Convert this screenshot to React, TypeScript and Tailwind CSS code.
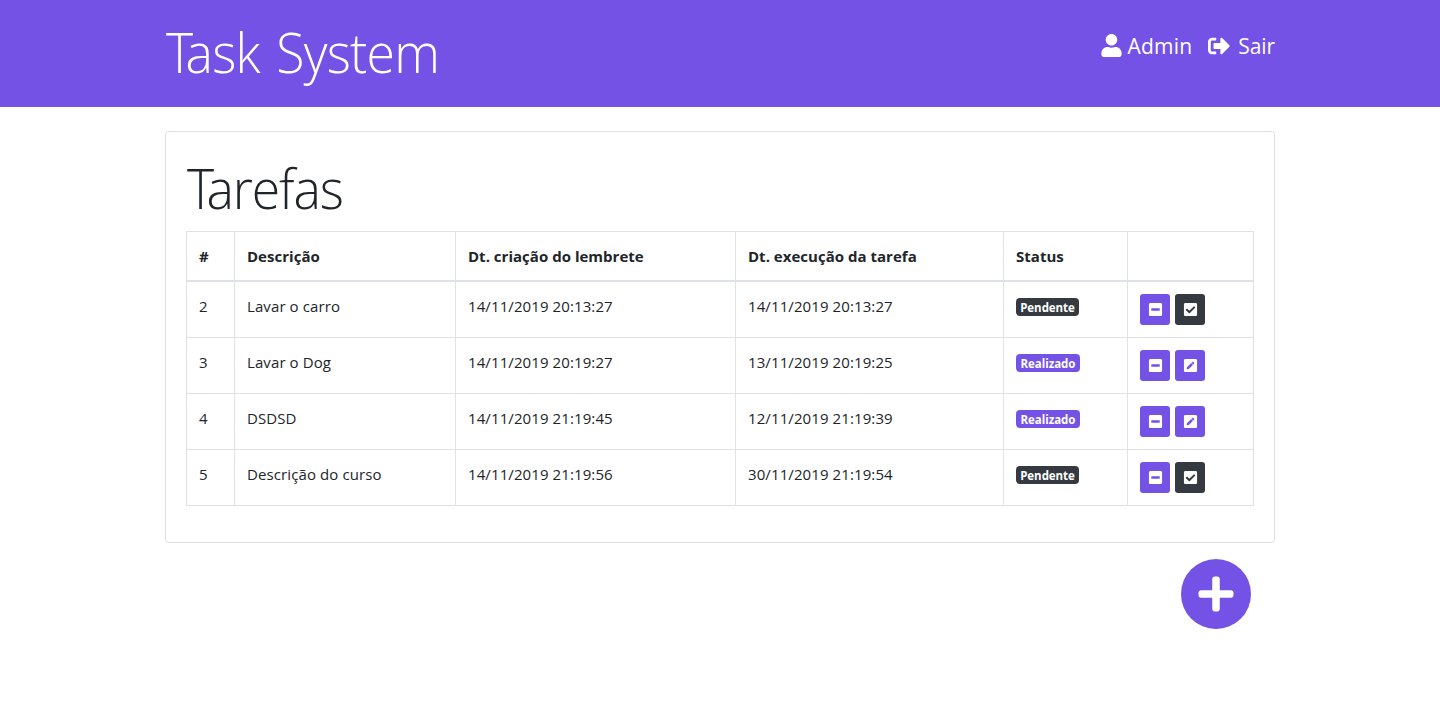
import type { ReactNode } from "react";
import { FaCheckSquare, FaMinusSquare, FaPenSquare, FaPlus, FaSignOutAlt, FaUser } from "react-icons/fa";

type Task = { id: number; text: string; created: string; due: string; done: boolean };

const tasks: Task[] = [
  { id: 2, text: "Lavar o carro", created: "14/11/2019 20:13:27", due: "14/11/2019 20:13:27", done: false },
  { id: 3, text: "Lavar o Dog", created: "14/11/2019 20:19:27", due: "13/11/2019 20:19:25", done: true },
  { id: 4, text: "DSDSD", created: "14/11/2019 21:19:45", due: "12/11/2019 21:19:39", done: true },
  { id: 5, text: "Descrição do curso", created: "14/11/2019 21:19:56", due: "30/11/2019 21:19:54", done: false },
];

function Th({ children }: { children?: ReactNode }) {
  return (
    <th className="h-[49px] border border-b-2 border-[#dee2e6] px-3 pt-3 text-left align-top text-[15px] leading-6 font-bold tracking-[0.02px]">
      {children}
    </th>
  );
}

function Td({ children }: { children?: ReactNode }) {
  return (
    <td className="h-14 border border-[#dee2e6] px-3 pt-3 align-top text-[15px] leading-6 tracking-[0.1px] group-first:h-[57px]">
      {children}
    </td>
  );
}

function ActionButton({ dark, label, children }: { dark?: boolean; label: string; children: ReactNode }) {
  return (
    <button
      aria-label={label}
      className={`flex h-[31px] w-[30px] items-center justify-center rounded-[3px] text-white ${dark ? "bg-[#343a40]" : "bg-[#7452e5]"}`}
    >
      {children}
    </button>
  );
}

export default function App() {
  return (
    <div className="min-h-[706px] bg-white font-['Open_Sans','Noto_Sans',sans-serif] text-[#212529]">
      <header className="h-[107px] bg-[#7452e5] text-white">
        <div className="mx-auto flex w-[1110px] items-start justify-between">
          <h1 className="ml-px origin-left scale-x-[0.94] pt-[18px] text-[55px] leading-[67px] font-light tracking-[-0.8px] whitespace-nowrap [word-spacing:4px] first-letter:tracking-[-8px]">
            Task System
          </h1>
          <nav className="flex pt-[29px] text-[21px] leading-[34px]">
            <a className="flex items-center">
              <FaUser className="mr-[5px] mb-px size-[23px]" />
              <span className="tracking-[0.2px]">Admin</span>
            </a>
            <a className="ml-4 flex items-center">
              <FaSignOutAlt className="mr-[8px] mb-px size-[22px]" />
              <span className="tracking-[-0.1px]">Sair</span>
            </a>
          </nav>
        </div>
      </header>
      <main className="mx-auto w-[1110px] pt-6">
        <section className="h-[412px] rounded border border-[#dfdfdf] px-5 pt-5">
          <h2 className="ml-px h-[79px] w-fit origin-left scale-x-[0.94] pt-[2px] text-[55px] leading-[67px] font-light tracking-[-1.2px] first-letter:tracking-[-8px]">
            Tarefas
          </h2>
          <table className="w-[1068px] table-fixed border-collapse">
            <colgroup>
              <col className="w-[48px]" />
              <col className="w-[221px]" />
              <col className="w-[280px]" />
              <col className="w-[268px]" />
              <col className="w-[124px]" />
              <col className="w-[126px]" />
            </colgroup>
            <thead>
              <tr>
                <Th>#</Th>
                <Th>Descrição</Th>
                <Th>Dt. criação do lembrete</Th>
                <Th>Dt. execução da tarefa</Th>
                <Th>Status</Th>
                <Th />
              </tr>
            </thead>
            <tbody>
              {tasks.map((task) => (
                <tr key={task.id} className="group">
                  <Td>{task.id}</Td>
                  <Td>{task.text}</Td>
                  <Td>{task.created}</Td>
                  <Td>{task.due}</Td>
                  <Td>
                    <span
                      className={`mt-1 flex h-[18px] items-center justify-center rounded pt-[2px] text-[11.5px] leading-none font-bold tracking-[-0.05px] text-white ${task.done ? "w-16 bg-[#7452e5]" : "w-[63px] bg-[#343a40]"}`}
                    >
                      {task.done ? "Realizado" : "Pendente"}
                    </span>
                  </Td>
                  <Td>
                    <div className="flex gap-[5px]">
                      <ActionButton label="Remover">
                        <FaMinusSquare className="ml-px size-[15px]" />
                      </ActionButton>
                      <ActionButton dark={!task.done} label={task.done ? "Editar" : "Concluir"}>
                        {task.done ? <FaPenSquare className="size-[15px]" /> : <FaCheckSquare className="size-[15px]" />}
                      </ActionButton>
                    </div>
                  </Td>
                </tr>
              ))}
            </tbody>
          </table>
        </section>
        <div className="flex justify-end pt-4 pr-6">
          <button aria-label="Adicionar" className="flex size-[70px] items-center justify-center rounded-full bg-[#7452e5] text-white">
            <FaPlus className="size-10" />
          </button>
        </div>
      </main>
    </div>
  );
}
